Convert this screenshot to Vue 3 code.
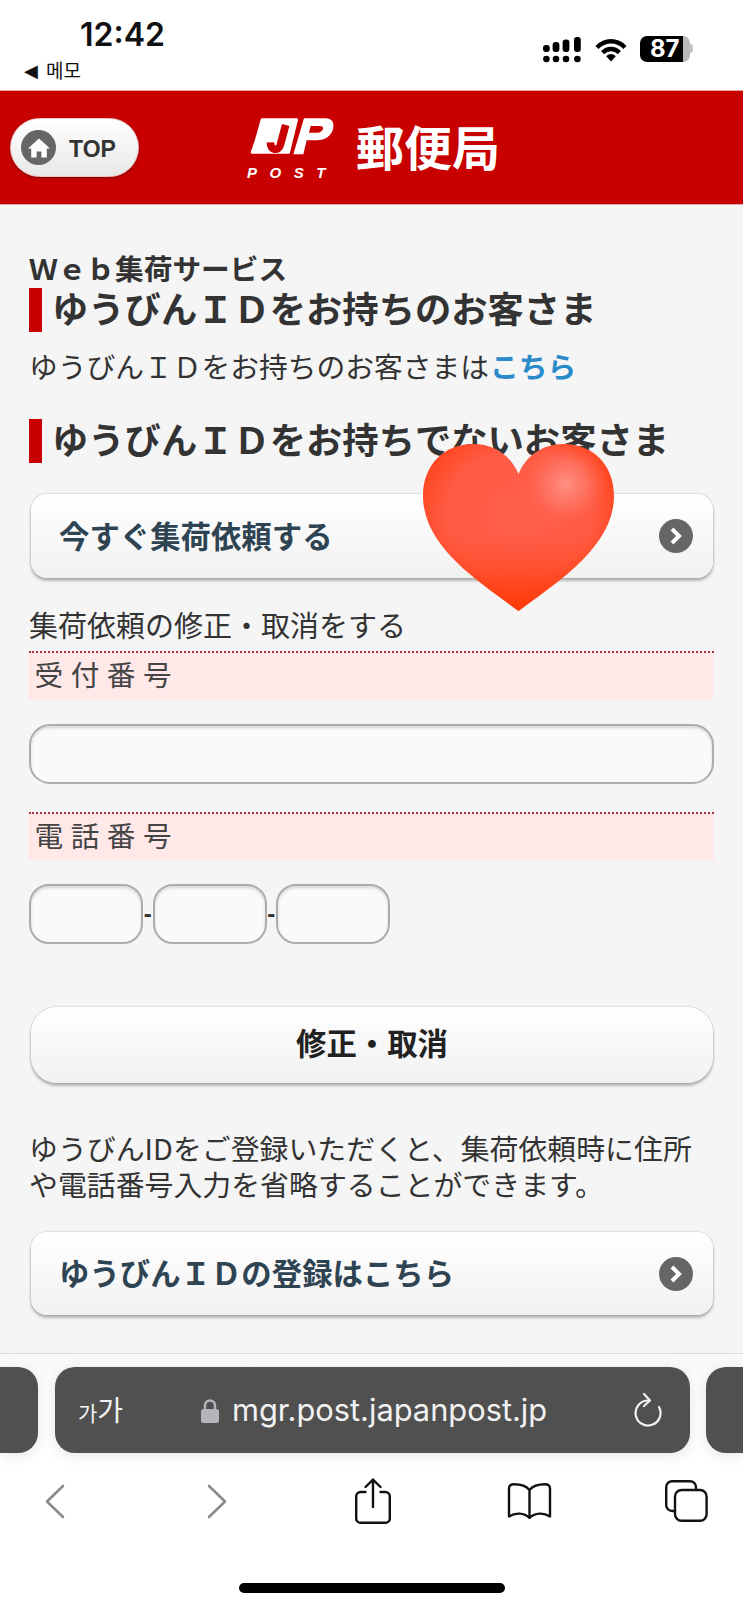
<script setup>
const chevron = 'M3 2L10 9L3 16'
const heartPath = 'M95.5 167C60 140 0 104 0 52C0 20 22 0 50 0C72 0 88 12 95.5 30C103 12 119 0 141 0C169 0 191 20 191 52C191 104 131 140 95.5 167Z'
</script>

<template>
  <div class="page">
    <div class="status">
      <div class="status-left">
        <div class="time">12:42</div>
        <div class="back-app"><span class="tri">◀</span><span class="memo">메모</span></div>
      </div>
      <div class="status-right">
        <svg class="signal" width="38" height="26" viewBox="0 0 38 26" fill="#000">
          <rect x="0" y="8" width="6.8" height="7" rx="3"/>
          <rect x="9.6" y="5" width="6.8" height="10" rx="3"/>
          <rect x="19.6" y="2.4" width="6.8" height="12.6" rx="3"/>
          <rect x="31" y="0" width="6.8" height="15" rx="3"/>
          <circle cx="3.4" cy="22" r="3.3"/>
          <circle cx="13" cy="22" r="3.3"/>
          <circle cx="23" cy="22" r="3.3"/>
          <circle cx="34.4" cy="22" r="3.3"/>
        </svg>
        <svg class="wifi" width="32" height="24" viewBox="0 0 32 24" fill="none" stroke="#000" stroke-width="4.4">
          <path d="M2 9.5C10 1.2 22 1.2 30 9.5"/>
          <path d="M7.6 14.6C12.4 9.8 19.6 9.8 24.4 14.6"/>
          <path d="M11.2 18.2L16 23.4L20.8 18.2C18 15.4 14 15.4 11.2 18.2Z" fill="#000" stroke="none"/>
        </svg>
        <div class="battery"><span class="batt-num">87</span></div>
        <div class="batt-tip"></div>
      </div>
    </div>

    <header class="header">
      <div class="top-btn">
        <span class="home">
          <svg width="22" height="20" viewBox="0 0 22 20" fill="#fff">
            <path d="M11 0.5L22 10.5H18.8V19.5H13.4V13.5H8.6V19.5H3.2V10.5H0Z"/>
          </svg>
        </span>
        <span class="top-text">TOP</span>
      </div>
      <div class="logo">
        <svg width="90" height="50" viewBox="0 0 270 150">
          <path fill="#fff" stroke="#fff" stroke-width="8" stroke-linejoin="round" d="M42 14H146L122 112H12C25 80 33 46 42 14Z"/>
          <path fill="none" stroke="#c80000" stroke-width="23" d="M113 30L97 90C91 110 68 106 67 82"/>
          <path fill="#fff" fill-rule="evenodd" d="M168 10H232C252 10 260 24 255 42C250 62 232 76 206 76H176L166 118H136ZM188 33L183 53H208C226 53 232 33 216 33Z"/>
        </svg>
        <div class="post">POST</div>
      </div>
      <div class="kyoku">郵便局</div>
    </header>

    <main class="main">
      <div class="service">Ｗｅｂ集荷サービス</div>
      <h2 class="h2">ゆうびんＩＤをお持ちのお客さま</h2>
      <p class="line first-line">ゆうびんＩＤをお持ちのお客さまは<a class="link">こちら</a></p>
      <h2 class="h2 second">ゆうびんＩＤをお持ちでないお客さま</h2>

      <div class="btn nav first-btn">
        <span class="nav-text">今すぐ集荷依頼する</span>
        <span class="arrow">
          <svg width="14" height="18" viewBox="0 0 14 18" fill="none" stroke="#fff" stroke-width="4"><path :d="chevron"/></svg>
        </span>
      </div>

      <p class="line fix-line">集荷依頼の修正・取消をする</p>
      <div class="label">受付番号</div>
      <input class="field wide" type="text" />
      <div class="label second-label">電話番号</div>
      <div class="tel">
        <input class="field short" type="text" /><span class="dash">-</span><input class="field short" type="text" /><span class="dash">-</span><input class="field short" type="text" />
      </div>

      <div class="btn center">修正・取消</div>

      <p class="para">ゆうびんIDをご登録いただくと、集荷依頼時に住所<br />や電話番号入力を省略することができます。</p>

      <div class="btn nav last-btn">
        <span class="nav-text">ゆうびんＩＤの登録はこちら</span>
        <span class="arrow">
          <svg width="14" height="18" viewBox="0 0 14 18" fill="none" stroke="#fff" stroke-width="4"><path :d="chevron"/></svg>
        </span>
      </div>
    </main>

    <section class="bottom">
      <div class="url-row">
        <div class="side left"></div>
        <div class="url">
          <span class="aa"><span class="aa-s">가</span><span class="aa-l">가</span></span>
          <svg class="lock" width="18" height="25" viewBox="0 0 18 25">
            <path d="M4 12V7.5a5 5 0 0 1 10 0V12" fill="none" stroke="#b4b4bc" stroke-width="2.4"/>
            <rect x="0" y="11" width="18" height="14" rx="2.5" fill="#b4b4bc"/>
          </svg>
          <span class="host">mgr.post.japanpost.jp</span>
          <svg class="reload" width="30" height="34" viewBox="0 0 30 34" fill="none" stroke="#f2f2f2" stroke-width="2.2" stroke-linecap="round" stroke-linejoin="round">
            <path d="M16 7.5A12.5 12.5 0 1 0 27 14"/>
            <path d="M12 1L18 7.5L12 13"/>
          </svg>
        </div>
        <div class="side right"></div>
      </div>

      <div class="toolbar">
        <svg class="i-back" width="20" height="35" viewBox="0 0 20 35" fill="none" stroke="#8c8c8c" stroke-width="2.6" stroke-linecap="round" stroke-linejoin="round"><path d="M18 2L2 17.5L18 33"/></svg>
        <svg class="i-fwd" width="20" height="35" viewBox="0 0 20 35" fill="none" stroke="#8c8c8c" stroke-width="2.6" stroke-linecap="round" stroke-linejoin="round"><path d="M2 2L18 17.5L2 33"/></svg>
        <svg class="i-share" width="36" height="46" viewBox="0 0 36 46" fill="none" stroke="#111" stroke-width="2.4" stroke-linecap="round" stroke-linejoin="round">
          <path d="M10.5 14H5.5A4.3 4.3 0 0 0 1.2 18.3V40.4A4.3 4.3 0 0 0 5.5 44.7H30.5A4.3 4.3 0 0 0 34.8 40.4V18.3A4.3 4.3 0 0 0 30.5 14H25.5"/>
          <path d="M18 29V2"/>
          <path d="M10.5 9L18 1.6L25.5 9"/>
        </svg>
        <svg class="i-book" width="45" height="36" viewBox="0 0 45 36" fill="none" stroke="#111" stroke-width="2.4" stroke-linecap="round" stroke-linejoin="round">
          <path d="M22.5 7C19 2.5 13 1.2 7 1.2C4 1.2 2 2.4 2 5.4V33.4C8 29.6 17 29.4 22.5 35C28 29.4 37 29.6 43 33.4V5.4C43 2.4 41 1.2 38 1.2C32 1.2 26 2.5 22.5 7V34"/>
        </svg>
        <svg class="i-tabs" width="43" height="42" viewBox="0 0 43 42" fill="none" stroke="#111" stroke-width="2.4" stroke-linecap="round" stroke-linejoin="round">
          <path d="M31 10V7.2A6 6 0 0 0 25 1.2H7.2A6 6 0 0 0 1.2 7.2V25A6 6 0 0 0 7.2 31H10"/>
          <rect x="10" y="10" width="31.6" height="30.8" rx="6.5"/>
        </svg>
      </div>
      <div class="indicator"></div>
    </section>

    <svg class="heart" width="191" height="168" viewBox="0 0 191 168">
      <defs>
        <radialGradient id="hb" cx="50%" cy="42%" r="62%">
          <stop offset="0" stop-color="#ff5f4d"/>
          <stop offset="0.62" stop-color="#ff5a42"/>
          <stop offset="1" stop-color="#ff3d10"/>
        </radialGradient>
        <radialGradient id="hl" cx="143" cy="40" r="42" gradientUnits="userSpaceOnUse">
          <stop offset="0" stop-color="#ff9488" stop-opacity="0.95"/>
          <stop offset="0.55" stop-color="#ff8174" stop-opacity="0.5"/>
          <stop offset="1" stop-color="#ff6a58" stop-opacity="0"/>
        </radialGradient>
        <linearGradient id="hv" x1="0" y1="0" x2="0" y2="1">
          <stop offset="0.55" stop-color="#ff4a20" stop-opacity="0"/>
          <stop offset="1" stop-color="#ff3a08" stop-opacity="1"/>
        </linearGradient>
      </defs>
      <path :d="heartPath" fill="url(#hb)"/>
      <path :d="heartPath" fill="url(#hv)"/>
      <path :d="heartPath" fill="url(#hl)"/>
    </svg>
  </div>
</template>

<style>
html, body { margin: 0; padding: 0; background: #fff; }
</style>

<style scoped>
.page {
  position: relative;
  width: 743px;
  height: 1608px;
  overflow: hidden;
  display: flex;
  flex-direction: column;
  background: #fff;
  font-family: "Noto Sans CJK JP", "Noto Sans", sans-serif;
}

/* status bar */
.status {
  height: 90px;
  flex: none;
  display: flex;
  justify-content: space-between;
  background: #fff;
}
.status-left { padding-left: 24px; }
.time {
  margin: 18px 0 0 56px;
  font-family: Inter, sans-serif;
  font-weight: 600;
  font-size: 32px;
  line-height: 34px;
  color: #111;
}
.back-app {
  display: flex;
  align-items: center;
  margin-top: 6px;
  height: 24px;
  color: #111;
}
.tri { font-family: "DejaVu Sans", sans-serif; font-size: 18px; width: 22px; }
.memo { font-family: "Noto Sans CJK KR", sans-serif; font-size: 19px; line-height: 24px; }
.status-right {
  display: flex;
  align-items: flex-start;
  padding: 36px 50px 0 0;
}
.signal { margin-top: 1px; }
.wifi { margin: 2px 0 0 14px; }
.battery {
  margin-left: 13px;
  width: 50px;
  height: 26px;
  border-radius: 7px;
  background: linear-gradient(90deg, #000 0, #000 86%, #b8b8b8 86%, #b8b8b8 100%);
  display: flex;
  align-items: center;
  padding-left: 10px;
  box-sizing: border-box;
}
.batt-num {
  font-family: Inter, sans-serif;
  font-weight: 700;
  font-size: 24px;
  line-height: 26px;
  color: #fff;
}
.batt-tip {
  width: 3px;
  height: 9px;
  margin-top: 8px;
  border-radius: 0 3px 3px 0;
  background: #c4c4c4;
}

/* red header */
.header {
  height: 115px;
  flex: none;
  display: flex;
  align-items: flex-start;
  box-sizing: border-box;
  background: #c80000;
  border-top: 1px solid #e9a0a0;
  border-bottom: 1px solid #e3a6a6;
  padding-left: 10px;
}
.top-btn {
  margin-top: 27px;
  width: 129px;
  height: 59px;
  box-sizing: border-box;
  border-radius: 30px;
  border: 1.5px solid #eec4c4;
  background: linear-gradient(#fff, #e8e8e8);
  box-shadow: 0 1px 3px rgba(60, 0, 0, 0.5);
  display: flex;
  align-items: center;
  padding-left: 10px;
}
.home {
  width: 35px;
  height: 35px;
  border-radius: 50%;
  background: #666;
  display: flex;
  align-items: center;
  justify-content: center;
}
.top-text {
  margin: 4px 0 0 13px;
  font-family: "Liberation Sans", sans-serif;
  font-weight: 700;
  font-size: 23px;
  color: #333;
}
.logo {
  margin: 24px 0 0 109px;
  width: 90px;
  display: flex;
  flex-direction: column;
}
.logo svg { display: block; }
.post {
  margin: 1px 0 0 -1px;
  font-family: "Liberation Sans", sans-serif;
  font-style: italic;
  font-weight: 700;
  font-size: 15px;
  line-height: 14px;
  letter-spacing: 12.5px;
  color: #fff;
  white-space: nowrap;
}
.kyoku {
  margin: 24px 0 0 18px;
  font-size: 48px;
  line-height: 60px;
  font-weight: 700;
  color: #fff;
  white-space: nowrap;
}

/* main */
.main {
  flex: 1;
  min-height: 0;
  box-sizing: border-box;
  padding: 49px 29px 0;
  background: #f5f5f5;
  color: #333;
}
.service {
  font-size: 28.7px;
  line-height: 28px;
  font-weight: 700;
  margin-bottom: 6px;
}
.h2 {
  margin: 0;
  height: 44px;
  border-left: 13.5px solid #c80000;
  padding-left: 10px;
  font-size: 36.3px;
  line-height: 38px;
  font-weight: 700;
  color: #333;
  white-space: nowrap;
}
.line {
  margin: 0;
  font-size: 29px;
  line-height: 34px;
  padding-bottom: 2px;
  white-space: nowrap;
}
.first-line { margin-top: 17px; font-size: 28.75px; }
.link { color: #2a8bcb; font-weight: 700; margin-left: 1px; }
.second { margin-top: 34px; }

.btn {
  margin: 0 1px 0 2px;
  border-radius: 16px;
  background: linear-gradient(#fff, #f1f1f1);
  box-shadow: 0 3px 3px rgba(0, 0, 0, 0.25), 0 0 2px rgba(0, 0, 0, 0.3);
  font-weight: 700;
  font-size: 30.4px;
  white-space: nowrap;
}
.nav {
  display: flex;
  align-items: center;
  justify-content: space-between;
  padding: 0 20px 0 28px;
  color: #2f4453;
}
.nav-text { margin-top: -3px; }
.first-btn { margin-top: 31px; height: 84px; }
.last-btn { margin-top: 31px; height: 83px; }
.arrow {
  width: 34px;
  height: 34px;
  border-radius: 50%;
  background: #666;
  display: flex;
  align-items: center;
  justify-content: center;
}
.fix-line { margin-top: 29px; }
.label {
  margin-top: 8px;
  height: 48px;
  box-sizing: border-box;
  border-top: 2px dotted #a5343f;
  background: #ffe8e8;
  padding-left: 5.5px;
  font-size: 28.7px;
  line-height: 42px;
  letter-spacing: 7.5px;
  color: #444;
}
.second-label { margin-top: 28px; }
.field {
  display: block;
  box-sizing: border-box;
  height: 60px;
  margin: 0;
  padding: 0;
  border: 2px solid #adadad;
  background: #fafafa;
  box-shadow: inset 0 2px 3px rgba(0, 0, 0, 0.14);
  outline: none;
}
.wide { width: 100%; margin-top: 25px; border-radius: 21px; }
.tel { display: flex; align-items: center; margin-top: 24px; }
.short { width: 114px; border-radius: 20px; }
.dash {
  width: 9.5px;
  font-family: "Liberation Sans", sans-serif;
  font-size: 24px;
  font-weight: 700;
  text-align: center;
  line-height: 60px;
  color: #333;
}
.center {
  margin-top: 63px;
  height: 76px;
  border-radius: 26px;
  line-height: 70px;
  text-align: center;
  color: #222;
}
.para {
  margin: 46px 0 0;
  font-size: 28.9px;
  line-height: 36px;
  white-space: nowrap;
}

/* browser chrome */
.bottom {
  height: 255px;
  flex: none;
  box-sizing: border-box;
  border-top: 1px solid #dcdcdc;
  background: linear-gradient(#f8f8f8, #fff 50px);
  display: flex;
  flex-direction: column;
}
.url-row {
  margin-top: 13px;
  height: 86px;
  display: flex;
  flex: none;
}
.side, .url {
  background: #505050;
  box-shadow: 0 3px 14px rgba(0, 0, 0, 0.1);
}
.side.left { width: 38px; border-radius: 0 20px 20px 0; margin-right: 16.5px; }
.side.right { flex: 1; border-radius: 20px 0 0 20px; margin-left: 15.5px; }
.url {
  width: 635.5px;
  border-radius: 20px;
  display: flex;
  align-items: center;
  color: #f2f2f2;
}
.aa {
  margin-left: 23.5px;
  width: 46px;
  display: flex;
  align-items: baseline;
  font-family: "Noto Sans CJK KR", sans-serif;
  line-height: 34px;
  white-space: nowrap;
}
.aa-s { font-size: 21px; }
.aa-l { font-size: 28px; }
.lock { margin-left: 77px; flex: none; }
.host {
  margin-left: 13px;
  font-family: Inter, sans-serif;
  font-size: 30.8px;
  line-height: 40px;
  white-space: nowrap;
}
.reload { margin-left: auto; margin-right: 28px; flex: none; }
.toolbar {
  height: 96px;
  flex: none;
  display: flex;
  align-items: center;
  padding-left: 45px;
}
.i-fwd { margin-left: 142px; }
.i-share { margin-left: 128px; }
.i-book { margin-left: 116px; }
.i-tabs { margin-left: 113px; }
.indicator {
  width: 266px;
  height: 10px;
  margin: 34px auto 0;
  border-radius: 5px;
  background: #000;
}

/* overlay sticker */
.heart {
  position: absolute;
  left: 423px;
  top: 444px;
}
</style>
